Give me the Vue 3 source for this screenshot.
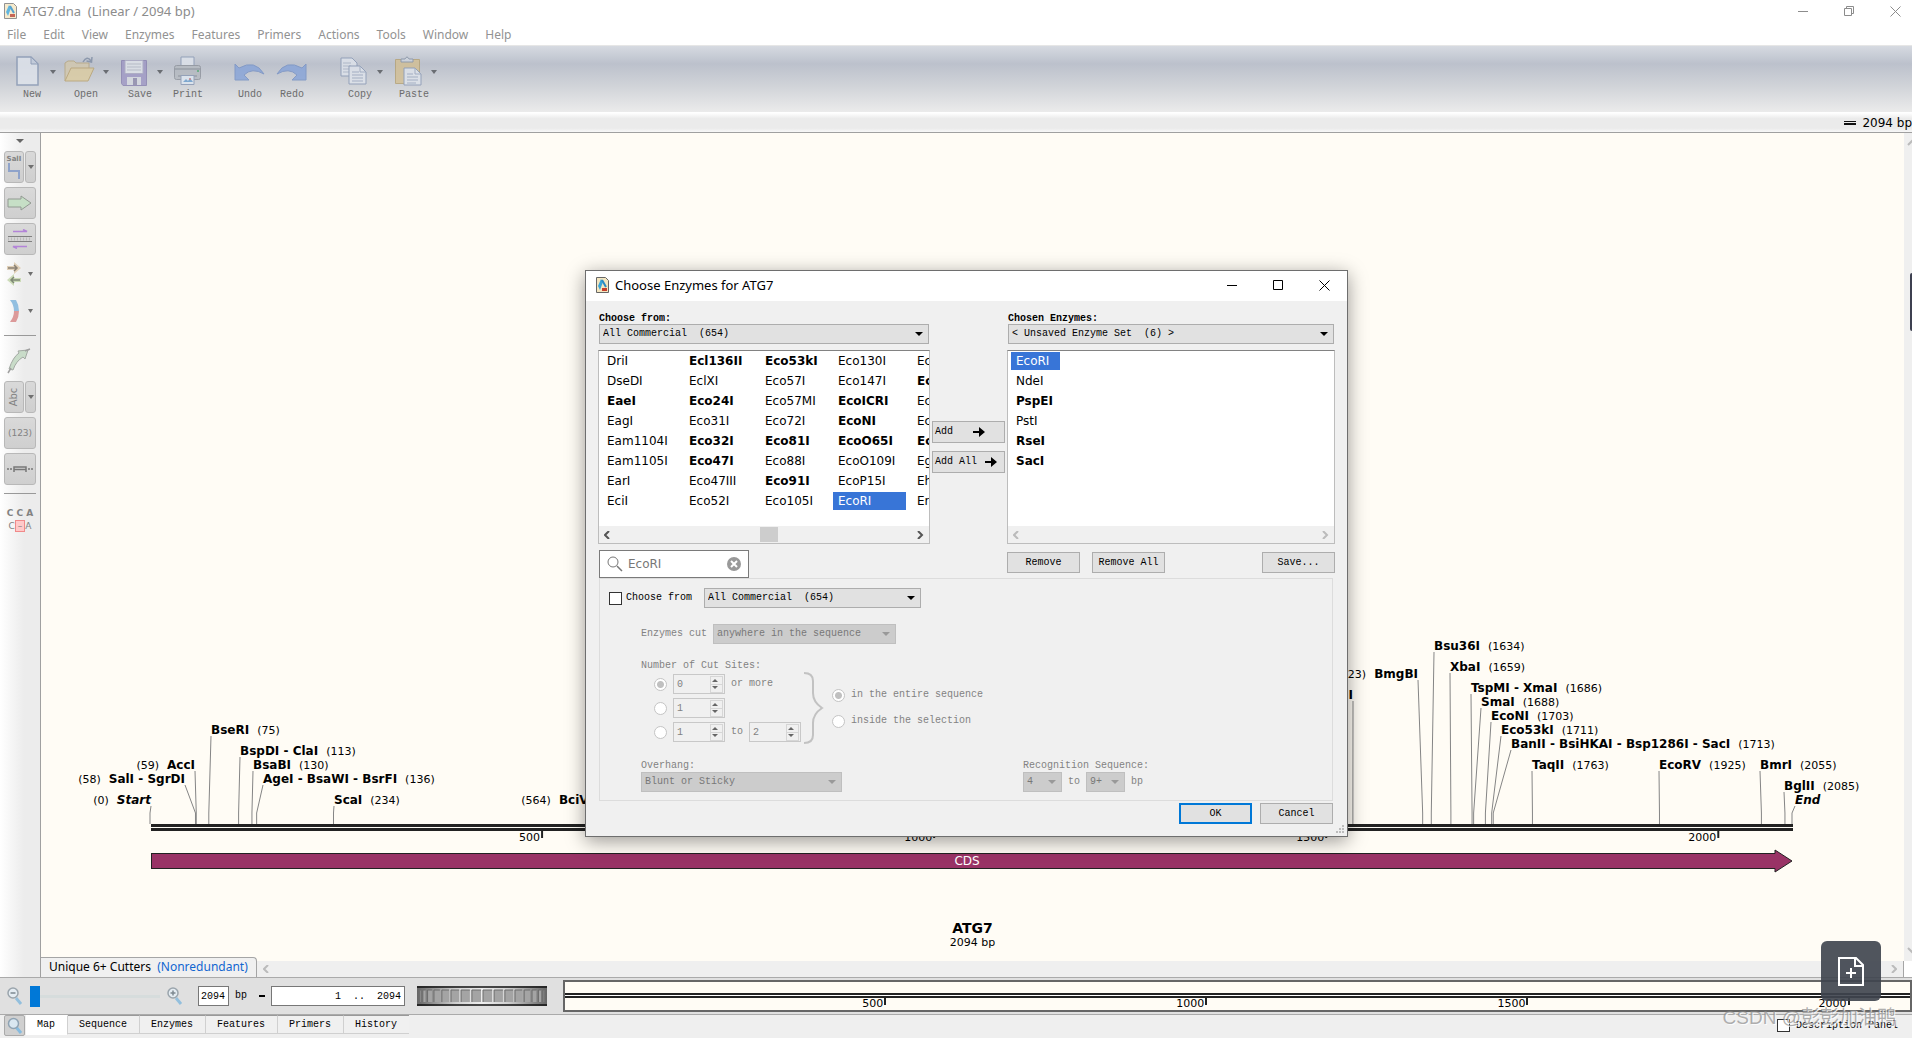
<script setup>
import { ref } from 'vue'

const menus = ['File', 'Edit', 'View', 'Enzymes', 'Features', 'Primers', 'Actions', 'Tools', 'Window', 'Help']
const tabs = ['Map', 'Sequence', 'Enzymes', 'Features', 'Primers', 'History']

// [name, bold]
const columns = [
  { w: 82, items: [['DriI'], ['DseDI'], ['EaeI', 1], ['EagI'], ['Eam1104I'], ['Eam1105I'], ['EarI'], ['EciI']] },
  { w: 76, items: [['Ecl136II', 1], ['EclXI'], ['Eco24I', 1], ['Eco31I'], ['Eco32I', 1], ['Eco47I', 1], ['Eco47III'], ['Eco52I']] },
  { w: 73, items: [['Eco53kI', 1], ['Eco57I'], ['Eco57MI'], ['Eco72I'], ['Eco81I', 1], ['Eco88I'], ['Eco91I', 1], ['Eco105I']] },
  { w: 79, items: [['Eco130I'], ['Eco147I'], ['EcoICRI', 1], ['EcoNI', 1], ['EcoO65I', 1], ['EcoO109I'], ['EcoP15I'], ['EcoRI']] },
  { w: 73, items: [['EcoRII'], ['EcoRV', 1], ['EcoT14I'], ['EcoT22I'], ['EcoT38I', 1], ['EgeI'], ['EheI'], ['ErhI']] },
]
const chosen = [['EcoRI'], ['NdeI'], ['PspEI', 1], ['PstI'], ['RseI', 1], ['SacI', 1]]

// Map canvas: horizontal units are 1863 wide, vertical ones are pixels.
const W = 1863
const pct = (v) => (v / W) * 100 + '%'
const site = (bp) => 109 + (bp * 1642) / 2094

const left = [
  { n: 'Start', bp: 0, x: 110, y: 671, it: true },
  { n: 'SalI - SgrDI', bp: 58, x: 144, y: 650 },
  { n: 'AccI', bp: 59, x: 154, y: 636 },
  { n: 'BciVI', bp: 564, x: 552, y: 671 },
  { n: 'PflMI', bp: 1534, x: 1312, y: 566 },
  { n: 'BmgBI', bp: 1623, x: 1377, y: 545 },
]
const right = [
  { n: 'BseRI', bp: 75, x: 170, y: 601 },
  { n: 'BspDI - ClaI', bp: 113, x: 199, y: 622 },
  { n: 'BsaBI', bp: 130, x: 212, y: 636 },
  { n: 'AgeI - BsaWI - BsrFI', bp: 136, x: 222, y: 650 },
  { n: 'ScaI', bp: 234, x: 293, y: 671 },
  { n: 'Bsu36I', bp: 1634, x: 1393, y: 517 },
  { n: 'XbaI', bp: 1659, x: 1409, y: 538 },
  { n: 'TspMI - XmaI', bp: 1686, x: 1430, y: 559 },
  { n: 'SmaI', bp: 1688, x: 1440, y: 573 },
  { n: 'EcoNI', bp: 1703, x: 1450, y: 587 },
  { n: 'Eco53kI', bp: 1711, x: 1460, y: 601 },
  { n: 'BanII - BsiHKAI - Bsp1286I - SacI', bp: 1713, x: 1470, y: 615 },
  { n: 'TaqII', bp: 1763, x: 1491, y: 636 },
  { n: 'EcoRV', bp: 1925, x: 1618, y: 636 },
  { n: 'BmrI', bp: 2055, x: 1719, y: 636 },
  { n: 'BglII', bp: 2085, x: 1743, y: 657 },
  { n: 'End', bp: 2094, x: 1754, y: 671, it: true, hideBp: true },
]
const ticks = [500, 1000, 1500, 2000]
const overviewTick = (bp) => (bp / 2094) * 100 + '%'

// Segments of the thumbwheel, a drum seen from the side.
const SEG = 16
const drum = (i) => 65 - 64 * Math.cos((Math.PI * (i + 1)) / (SEG + 2))
const segments = Array.from({ length: SEG }, (_, i) => ({ x: drum(i), w: drum(i + 1) - drum(i) - 2 }))

const limit = ref(false)
</script>

<template>
  <div class="app">
    <header class="titlebar">
      <svg class="appicon" width="13" height="16" viewBox="0 0 13 16"><path d="M.5.5h9l3 3v12H.5z" fill="#f4e6c0" stroke="#777"/><path d="M2 9 5 2l2 3-3 8z" fill="#3aa5d8"/><path d="m6 3 4 7" stroke="#2b8bc4" stroke-width="2"/><path d="M6 11h5v3H6z" fill="#b8402c"/></svg>
      <h1>ATG7.dna &nbsp;(Linear / 2094 bp)</h1>
      <div class="winbtns">
        <button aria-label="Minimize"><svg width="11" height="11" viewBox="0 0 11 11"><path d="M0 5.500h10"/></svg></button>
        <button aria-label="Restore"><svg width="11" height="11" viewBox="0 0 11 11"><path d="M.5 2.500h7v7h-7zM2.500 2.500v-2h7v7h-2"/></svg></button>
        <button aria-label="Close"><svg width="11" height="11" viewBox="0 0 11 11"><path d="m.5.5 10 10M10.500.5l-10 10"/></svg></button>
      </div>
    </header>
    <nav class="menubar"><button v-for="m in menus" :key="m">{{ m }}</button></nav>

    <div class="toolbar">
      <button class="tool">
        <svg width="54" height="32" viewBox="0 0 54 32"><path d="M12 2h14l7 7v21H12z" fill="#dfe4ec" stroke="#8797b3" stroke-width="1.500"/><path d="M26 2v7h7z" fill="#c3cddd" stroke="#8797b3"/><path class="dd" d="M45 15h6l-3 4z"/></svg>
        New
      </button>
      <button class="tool">
        <svg width="54" height="32" viewBox="0 0 54 32"><path d="M6 26V8l3-2h6l2 2h13v7" fill="#d3c8ad" stroke="#b7a57c"/><path d="M6 26 12 13h23l-6 13z" fill="#dccca0" stroke="#b9a26e"/><path d="M24 7q4-7 8-1m1-4-.5 5-5-1" fill="none" stroke="#7f8da3" stroke-width="1.500"/><path class="dd" d="M44 15h6l-3 4z"/></svg>
        Open
      </button>
      <button class="tool">
        <svg width="54" height="32" viewBox="0 0 54 32"><path d="M8.500 5.500h25v25H10l-1.500-2z" fill="#9d96c4" stroke="#8881af"/><path d="M12 5.500h18v13H12z" fill="#e0e4ea" stroke="#a9a7c2"/><path d="M14 9h14m-14 3h14m-14 3h14" stroke="#b4b9c5"/><path d="M14 22h14v8H14z" fill="#d5d8e0"/><path d="M20 23h4v7h-4z" fill="#8d89ab"/><path class="dd" d="M44 15h6l-3 4z"/></svg>
        Save
      </button>
      <button class="tool slim">
        <svg width="42" height="32" viewBox="0 0 42 32"><path d="M14 2h13v10H14z" fill="#dfe4ec" stroke="#8797b3"/><rect x="7.500" y="10.500" width="26" height="14" rx="2" fill="#b4b9c0" stroke="#8d929b"/><path d="M8 14h25M11 21h19" stroke="#7f858f"/><path d="M30 16h2" stroke="#5aa878" stroke-width="2"/><path d="M14 20.500h13v9H14z" fill="#dfe8f2" stroke="#8797b3"/><path d="m16 27 3-3 2 2 2-3 3 4z" fill="#6c9fce"/><circle cx="23" cy="24" r="1" fill="#c77"/></svg>
        Print
      </button>
      <button class="tool slim gap">
        <svg width="42" height="32" viewBox="0 0 42 32"><path d="M6 9v16h14l-5-5q8-8 20-1-9-15-25-6z" fill="#86a3d8" stroke="#7590c4"/></svg>
        Undo
      </button>
      <button class="tool slim">
        <svg width="42" height="32" viewBox="0 0 42 32"><path d="M35 9v16H21l5-5q-8-8-20-1 9-15 25-6z" fill="#86a3d8" stroke="#7590c4"/></svg>
        Redo
      </button>
      <button class="tool gap">
        <svg width="54" height="32" viewBox="0 0 54 32"><path d="M8 3h11l5 5v13H8z" fill="#dfe4ec" stroke="#8797b3"/><path d="M10 8h8m-8 3h8m-8 3h8m-8 3h8" stroke="#aab4c6"/><path d="M16 11h11l6 6v12H16z" fill="#dfe4ec" stroke="#8797b3"/><path d="M27 11v6h6M19 17h7m-7 3h11m-11 3h11m-11 3h11" fill="none" stroke="#9aa7be"/><path class="dd" d="M44 15h6l-3 4z"/></svg>
        Copy
      </button>
      <button class="tool">
        <svg width="54" height="32" viewBox="0 0 54 32"><path d="M8.500 4.500h24v24h-24z" fill="#d3bf93" stroke="#b5a172"/><path d="M14 7V4h4q2-4 4 0h4v3z" fill="#cfd5de" stroke="#8490a3"/><path d="M17 13h11l6 6v11H17z" fill="#dfe4ec" stroke="#8797b3"/><path d="M28 13v6h6M20 19h6m-6 3h11m-11 3h11m-11 3h9" fill="none" stroke="#9aa7be"/><path class="dd" d="M44 15h6l-3 4z"/></svg>
        Paste
      </button>
    </div>

    <div class="infobar"><i class="dbl"></i><span>2094 bp</span></div>

    <main class="main">
      <aside class="side">
        <svg class="caret" width="8" height="4" viewBox="0 0 8 4"><path d="M0 0h8L4 4z"/></svg>
        <div class="pair">
          <button class="sq narrow" aria-label="Enzyme sites"><small>SalI</small><svg width="16" height="17" viewBox="0 0 16 17"><path d="M3 0v8h10v8" fill="none" stroke="#8fa3ca" stroke-width="2"/></svg></button>
          <button class="sq drop" aria-label="Enzyme options"><svg width="6" height="4" viewBox="0 0 6 4"><path d="M0 0h6L3 4z"/></svg></button>
        </div>
        <button class="sq" aria-label="Features"><svg width="26" height="16" viewBox="0 0 26 16"><path d="M1 4h13V1l10 7-10 7v-3H1z" fill="#c6dfc6" stroke="#929a92"/></svg></button>
        <button class="sq" aria-label="Primers"><svg width="26" height="20" viewBox="0 0 26 20"><path d="M6 2.500h14l-4-2M20 17.500H6l4 2" fill="none" stroke="#b384d8" stroke-width="1.500"/><path d="M1 7.500h24M1 12.500h24" stroke="#808080"/><path d="M1 10h24" stroke="#bbb" stroke-width="3" stroke-dasharray="1 2"/></svg></button>
        <button class="plain" aria-label="ORFs"><svg width="30" height="26" viewBox="0 0 30 26"><path d="M1 4h7V0l7 6-7 6V8H1z" fill="#e0d0b8"/><path d="M2 6h9M8 3l3 3-3 3" stroke="#8a8174" stroke-width="1.500" fill="none"/><path d="M15 16H8v-4l-7 6 7 6v-4h7z" fill="#ccdbb8"/><path d="M14 18H5m3-3-3 3 3 3" stroke="#7e8874" stroke-width="1.500" fill="none"/><path d="M22 10h5l-2.500 4z" fill="#6e6e6e"/></svg></button>
        <button class="plain" aria-label="Translation"><svg width="30" height="26" viewBox="0 0 30 26"><path d="M4 2h6q3 5 3 11H8Q8 7 4 2z" fill="#92bfe0"/><path d="M13 13q0 6-3 11H4q4-5 4-11z" fill="#dc9a9a"/><path d="M22 11h5l-2.500 4z" fill="#6e6e6e"/></svg></button>
        <hr />
        <button class="plain" aria-label="Draw feature"><svg width="26" height="26" viewBox="0 0 26 26"><path d="M3 21Q7 9 13 5l-1-2 10-1-3 9-2-2Q10 13 7 22z" fill="#c9dcc9" stroke="#a3a9a3"/><path d="m2 25 3-5M19 3l5-2" stroke="#a0a0a0" stroke-width="1.500"/></svg></button>
        <div class="pair">
          <button class="sq narrow"><span class="vert">Abc</span></button>
          <button class="sq drop" aria-label="Label options"><svg width="6" height="4" viewBox="0 0 6 4"><path d="M0 0h6L3 4z"/></svg></button>
        </div>
        <button class="sq num">(123)</button>
        <button class="sq" aria-label="Gap display"><svg width="28" height="8" viewBox="0 0 28 8"><path d="M1 4h2m1 0h2m16 0h2m1 0h2M8 7V2h12v5M8 4.500h12" fill="none" stroke="#777" stroke-width="1.500"/></svg></button>
        <hr />
        <div class="cca"><span>C C A</span><span class="low">C<mark>–</mark>A</span></div>
      </aside>

      <section class="canvas">
        <svg class="map">
          <g v-for="s in [...left, ...right]" :key="'l' + s.bp" stroke="#858585">
            <line :x1="pct(s.x)" :y1="s.y + 2" :x2="pct(site(s.bp))" y2="680" />
            <line :x1="pct(site(s.bp))" y1="680" :x2="pct(site(s.bp))" y2="691" />
          </g>
          <text v-for="s in left" :key="s.n" :x="pct(s.x)" :y="s.y" text-anchor="end">({{ s.bp }})<tspan dx="8" :class="['site', { it: s.it }]">{{ s.n }}</tspan></text>
          <text v-for="s in right" :key="s.n" :x="pct(s.x)" :y="s.y"><tspan :class="['site', { it: s.it }]">{{ s.n }}</tspan><tspan v-if="!s.hideBp" dx="8">({{ s.bp }})</tspan></text>
          <rect :x="pct(110)" y="691" :width="pct(1642)" height="3" fill="#222" />
          <rect :x="pct(110)" y="695" :width="pct(1642)" height="3" fill="#222" />
          <g v-for="t in ticks" :key="t">
            <rect :x="pct(site(t) - 1)" y="698" width="2" height="7" fill="#222" />
            <text :x="pct(site(t) - 2)" y="708" text-anchor="end">{{ t }}</text>
          </g>
        </svg>
        <div class="cds">
          <span>CDS</span>
          <svg width="19" height="24" viewBox="0 0 19 24"><path d="M0 4.500h1V1l17 11L1 23v-3.500H0" fill="#993366" stroke="#222"/></svg>
        </div>
        <div class="caption"><b>ATG7</b><span>2094 bp</span></div>
        <div class="hrow">
          <span class="settab">Unique 6+ Cutters &nbsp;<em>(Nonredundant)</em></span>
          <span class="hbar"><svg width="6" height="8" viewBox="0 0 6 8"><path d="M5 0 1 4l4 4"/></svg><svg width="6" height="8" viewBox="0 0 6 8"><path d="m1 0 4 4-4 4"/></svg></span>
          <i class="corner"></i>
        </div>
      </section>
      <div class="vbar"><svg width="8" height="8" viewBox="0 0 8 8"><path d="m1 7 5-5 5 5"/></svg><svg width="8" height="8" viewBox="0 0 8 8"><path d="m1 1 5 5 5-5"/></svg></div>
    </main>

    <div class="zoombar">
      <svg width="16" height="18" viewBox="0 0 16 18"><path d="m9 11 5 6" stroke="#93bfdd" stroke-width="3"/><circle cx="6" cy="6" r="5" fill="#e4ecf2" stroke="#9aa4ac" stroke-width="1.500"/><path d="M3.500 6h5" stroke="#7d8890" stroke-width="1.500"/></svg>
      <input class="slider" type="range" min="0" max="100" value="0" aria-label="Zoom" />
      <svg width="16" height="18" viewBox="0 0 16 18"><path d="m9 11 5 6" stroke="#93bfdd" stroke-width="3"/><circle cx="6" cy="6" r="5" fill="#e4ecf2" stroke="#9aa4ac" stroke-width="1.500"/><path d="M3.500 6h5M6 3.500v5" stroke="#7d8890" stroke-width="1.500"/></svg>
      <input class="box len" value="2094" aria-label="Length" />
      <span class="bp">bp</span><i class="dash"></i>
      <input class="box range" value="1  ..  2094" aria-label="Selected range" />
      <svg class="wheel" width="130" height="20" viewBox="0 0 130 20">
        <defs>
          <linearGradient id="drum"><stop offset="0" stop-color="#666" /><stop offset=".3" stop-color="#d0d0d0" /><stop offset=".5" stop-color="#eee" /><stop offset=".7" stop-color="#d0d0d0" /><stop offset="1" stop-color="#666" /></linearGradient>
        </defs>
        <rect width="130" height="20" fill="url(#drum)" />
        <rect v-for="s in segments" :key="s.x" :x="s.x + 1" y="4" :width="Math.max(s.w, 1)" height="12" fill="#a4a4a4" />
        <path v-for="s in segments" :key="'e' + s.x" :d="`M${s.x + 1} 16V4h${Math.max(s.w, 1)}`" fill="none" stroke="#6c6c6c" />
        <path d="M0 1h130M0 19h130" stroke="#111" stroke-width="1.500" />
      </svg>
      <div class="overview">
        <div class="strand"></div>
        <span v-for="t in ticks" :key="t" class="otick" :style="{ left: overviewTick(t) }">{{ t }}</span>
      </div>
    </div>

    <footer class="tabs">
      <button class="mag" aria-label="Find"><svg width="16" height="18" viewBox="0 0 16 18"><path d="m9 10 5 6" stroke="#86bbdf" stroke-width="3"/><circle cx="6.500" cy="6.500" r="5" fill="#d9e7f1" stroke="#8fa3b3" stroke-width="1.500"/></svg></button>
      <button v-for="(t, i) in tabs" :key="t" :class="['tab', { on: i === 0 }]">{{ t }}</button>
      <label class="desc"><input type="checkbox" />Description Panel</label>
    </footer>

    <section class="dialog" role="dialog" aria-label="Choose Enzymes for ATG7">
      <header class="dtitle">
        <svg width="13" height="16" viewBox="0 0 13 16"><path d="M.5.5h9l3 3v12H.5z" fill="#f4e6c0" stroke="#666"/><path d="M2 9 5 2l2 3-3 8z" fill="#3aa5d8"/><path d="m6 3 4 7" stroke="#2b8bc4" stroke-width="2"/><path d="M6 11h5v3H6z" fill="#c8402c"/></svg>
        <h2>Choose Enzymes for ATG7</h2>
        <div class="winbtns">
          <button aria-label="Minimize"><svg width="11" height="11" viewBox="0 0 11 11"><path d="M0 5.500h10"/></svg></button>
          <button aria-label="Maximize"><svg width="11" height="11" viewBox="0 0 11 11"><path d="M.5.5h9v9h-9z"/></svg></button>
          <button aria-label="Close"><svg width="11" height="11" viewBox="0 0 11 11"><path d="m.5.5 10 10M10.500.5l-10 10"/></svg></button>
        </div>
      </header>

      <div class="pick">
        <div class="col from">
          <label class="head" for="src">Choose from:</label>
          <span class="sel wide"><select id="src"><option>All Commercial &nbsp;(654)</option></select></span>
          <div class="list">
            <div class="cols">
              <ul v-for="(c, i) in columns" :key="i" :style="{ width: c.w + 'px' }">
                <li v-for="e in c.items" :key="e[0]" :class="{ b: e[1], sel1: e[0] === 'EcoRI' }">{{ e[0] }}</li>
              </ul>
            </div>
            <div class="scroll dark"><svg width="7" height="8" viewBox="0 0 7 8"><path d="M5 0 1 4l4 4"/></svg><i></i><svg width="7" height="8" viewBox="0 0 7 8"><path d="m1 0 4 4-4 4"/></svg></div>
          </div>
          <div class="search">
            <svg width="16" height="16" viewBox="0 0 16 16"><circle cx="6" cy="6" r="5" fill="none" stroke="#777"/><path d="m10 10 5 5" stroke="#777" stroke-width="1.500"/></svg>
            <input value="EcoRI" aria-label="Search enzymes" />
            <button aria-label="Clear"><svg width="14" height="14" viewBox="0 0 14 14"><circle cx="7" cy="7" r="7" fill="#999"/><path d="m4 4 6 6m0-6-6 6" stroke="#fff" stroke-width="2"/></svg></button>
          </div>
        </div>

        <div class="moves">
          <button class="btn">Add<svg width="12" height="10" viewBox="0 0 12 10"><path d="M0 4h6V0l6 5-6 5V6H0z"/></svg></button>
          <button class="btn all">Add All<svg width="12" height="10" viewBox="0 0 12 10"><path d="M0 4h6V0l6 5-6 5V6H0z"/></svg></button>
        </div>

        <div class="col to">
          <label class="head" for="set">Chosen Enzymes:</label>
          <span class="sel wide"><select id="set"><option>&lt; Unsaved Enzyme Set &nbsp;(6) &gt;</option></select></span>
          <div class="list">
            <div class="cols">
              <ul>
                <li v-for="e in chosen" :key="e[0]" :class="{ b: e[1], sel2: e[0] === 'EcoRI' }">{{ e[0] }}</li>
              </ul>
            </div>
            <div class="scroll"><svg width="7" height="8" viewBox="0 0 7 8"><path d="M5 0 1 4l4 4"/></svg><svg width="7" height="8" viewBox="0 0 7 8"><path d="m1 0 4 4-4 4"/></svg></div>
          </div>
          <div class="acts"><button class="btn">Remove</button><button class="btn">Remove All</button><button class="btn last">Save...</button></div>
        </div>
      </div>

      <div class="panel">
        <div class="row">
          <label class="chk"><input v-model="limit" type="checkbox" />Choose from</label>
          <span class="sel w217"><select aria-label="Choose from"><option>All Commercial &nbsp;(654)</option></select></span>
        </div>
        <div class="inner">
          <div class="row">
            <label for="cut">Enzymes cut</label>
            <span class="sel w183 off"><select id="cut" disabled><option>anywhere in the sequence</option></select></span>
          </div>
          <div class="sites">
            <p>Number of Cut Sites:</p>
            <div class="sitesrow">
              <div class="counts">
                <div class="line"><input type="radio" name="n" checked disabled aria-label="At least" /><span class="spin"><input type="number" value="0" disabled aria-label="Minimum" /></span>or more</div>
                <div class="line"><input type="radio" name="n" disabled aria-label="Exactly" /><span class="spin"><input type="number" value="1" disabled aria-label="Exact count" /></span></div>
                <div class="line"><input type="radio" name="n" disabled aria-label="Between" /><span class="spin"><input type="number" value="1" disabled aria-label="Lowest" /></span>to<span class="spin"><input type="number" value="2" disabled aria-label="Highest" /></span></div>
              </div>
              <svg class="brace" width="20" height="72" viewBox="0 0 20 72"><path d="M0 1q9 0 9 8v12q0 9 9 15-9 6-9 15v12q0 8-9 8" fill="none" stroke="#c2c2c2" stroke-width="2"/></svg>
              <div class="where">
                <label><input type="radio" name="w" checked disabled />in the entire sequence</label>
                <label><input type="radio" name="w" disabled />inside the selection</label>
              </div>
            </div>
          </div>
          <div class="ends">
            <div class="fld"><label for="oh">Overhang:</label><span class="sel w201 off"><select id="oh" disabled><option>Blunt or Sticky</option></select></span></div>
            <div class="fld rec">
              <label for="r1">Recognition Sequence:</label>
              <div class="line"><span class="sel w39 off"><select id="r1" disabled><option>4</option></select></span>to<span class="sel w39 off"><select disabled aria-label="Longest"><option>9+</option></select></span>bp</div>
            </div>
          </div>
        </div>
      </div>
      <div class="foot"><button class="btn ok">OK</button><button class="btn">Cancel</button></div>
      <svg class="grip" width="9" height="9" viewBox="0 0 9 9"><path d="M6 0h2v2H6zM3 3h2v2H3zM6 3h2v2H6zM0 6h2v2H0zM3 6h2v2H3zM6 6h2v2H6z" fill="#bcbcbc"/></svg>
    </section>

    <i class="edge"></i>
    <button class="float" aria-label="Add note"><svg width="26" height="29" viewBox="0 0 26 29"><path d="M1 1h17l7 7v20H1zM17 1v8h8M13 11v10M8 16h10" fill="none" stroke="#fff" stroke-width="2"/></svg></button>
    <span class="mark">CSDN @彭彭加油鸭</span>
  </div>
</template>

<style>
body { overflow: hidden; }
</style>

<style scoped>
.app { position: relative; display: flex; flex-direction: column; height: 100vh; background: #fff; color: #000; font: 10px/12px "Liberation Mono", monospace; overflow: hidden; }
.app * { box-sizing: border-box; }
button { font: inherit; color: inherit; border: 0; background: none; padding: 0; margin: 0; }
input, select { font: inherit; color: inherit; margin: 0; }
ul, p, h1, h2 { margin: 0; padding: 0; list-style: none; }

.titlebar { display: flex; align-items: center; height: 22px; padding-left: 4px; color: #8c8c8c; }
.appicon { opacity: .8; }
h1, h2 { font: 13px/18px "Noto Sans", sans-serif; margin-left: 6px; }
.winbtns { display: flex; margin-left: auto; }
.winbtns button { width: 46px; display: flex; justify-content: center; }
.winbtns path { fill: none; stroke: currentColor; }
.titlebar .winbtns { margin-right: -6px; }
.menubar { display: flex; gap: 17px; height: 23px; padding: 3px 8px 0 7px; font: 12px/18px "Noto Sans", sans-serif; color: #929292; align-items: flex-start; }
.menubar button { height: 20px; }

.toolbar { display: flex; height: 67px; padding: 9px 5px 0; border-top: 1px solid #e6e6e6; background: linear-gradient(#d6dae1, #bcc1cc 27%, #d0d3d8 60%, #ebebeb); color: #6c6c6c; }
.tool { width: 54px; display: flex; flex-direction: column; align-items: center; gap: 2px; height: 48px; }
.tool svg { opacity: .8; }
.tool.slim { width: 42px; }
.tool.gap { margin-left: 20px; }
.dd { fill: #54575c; }

.infobar { display: flex; align-items: center; justify-content: flex-end; gap: 6px; height: 21px; border-bottom: 1px solid #a0a0a0; border-top: 1px solid #fff; background: linear-gradient(#fff, #ebebeb 30%, #ebebeb 80%, #f8f8f8); font: 12px/18px "DejaVu Sans", sans-serif; }
.infobar span { white-space: nowrap; }
.dbl { width: 12px; height: 4px; border: solid #111; border-width: 1px 0 2px; }

.main { flex: 1; display: flex; min-height: 0; }
.side { width: 41px; display: flex; flex-direction: column; gap: 4px; padding: 6px 4px; border-right: 1px solid #a0a0a0; background: linear-gradient(90deg, #fff, #ececec 60%); color: #828282; }
.caret { margin: 0 auto 4px 12px; fill: #666; }
.sq { width: 32px; height: 32px; border: 1px solid #b8b8b8; border-radius: 3px; background: linear-gradient(#d9d9d9, #cfcfcf); display: flex; flex-direction: column; align-items: center; justify-content: center; }
.pair { display: flex; gap: 1px; }
.narrow { width: 20px; }
.drop { width: 11px; }
.drop path { fill: #707070; }
.sq small { font: bold 7px/8px "DejaVu Sans", sans-serif; }
.vert { font: 10px/12px "DejaVu Sans", sans-serif; transform: rotate(-90deg); }
.num { font: 9px/12px "DejaVu Sans", sans-serif; }
.plain { height: 32px; display: flex; align-items: center; padding-left: 2px; }
.side hr { width: 32px; height: 1px; margin: 4px 0 5px; border: 0; background: #999; }
.cca { font: bold 9px/13px "DejaVu Sans", sans-serif; width: 32px; margin-top: 4px; text-align: center; display: flex; flex-direction: column; white-space: nowrap; }
.low { font-weight: normal; }
mark { color: inherit; background: #ffc9c9; border: 1px solid #f08a8a; padding: 0 2px; }

.canvas { flex: 1; min-width: 0; position: relative; display: flex; flex-direction: column; background: #fffcf5; font: 11px/14px "DejaVu Sans", sans-serif; }
.map { width: 100%; height: 716px; display: block; overflow: hidden; }
.site { font-size: 12px; font-weight: bold; }
.it { font-style: italic; }
.cds { display: flex; align-items: center; height: 24px; margin: 0 111px 0 110px; color: #fff; }
.cds span { flex: 1; height: 16px; border: 1px solid #222; border-right: 0; background: #993366; text-align: center; font-size: 12px; padding-left: 8px; }
.caption { display: flex; flex-direction: column; align-items: center; margin: 47px 0 auto; }
.caption b { font-size: 14px; line-height: 16px; }
.hrow { display: flex; align-items: flex-end; height: 20px; font: 12px/16px "Noto Sans", sans-serif; }
.settab { height: 20px; padding: 1px 8px 0; border: 1px solid #a5a5a5; border-width: 1px 1px 0 0; border-radius: 0 4px 0 0; background: #f0f0f0; white-space: nowrap; }
.settab em { font-style: normal; color: #1166d0; }
.hbar { flex: 1; height: 16px; background: #efefef; display: flex; align-items: center; justify-content: space-between; padding: 0 6px; }
.hbar path, .vbar path, .scroll path { fill: none; stroke: #bbb; stroke-width: 2; }
.corner { width: 1px; height: 16px; background: #a5a5a5; }
.vbar { width: 8px; background: linear-gradient(#efefef, #efefef) top / 100% calc(100% - 16px) no-repeat #fff; display: flex; flex-direction: column; justify-content: space-between; padding: 5px 0 22px 3px; }

.zoombar { display: flex; align-items: center; height: 38px; padding-left: 7px; background: #e0e0e0; border: solid #aaa; border-width: 1px 0; }
.slider { appearance: none; width: 130px; height: 22px; margin: 0 7px; background: linear-gradient(#d6dcdc, #d6dcdc) center / 100% 3px no-repeat; }
.slider::-webkit-slider-thumb { appearance: none; width: 10px; height: 21px; background: #0078d7; }
.box { height: 20px; border: 1px solid #777; border-radius: 0; background: #fff; padding: 0 3px; outline: 0; }
.len { width: 31px; margin-left: 15px; padding: 0 2px; }
.bp { margin: 0 12px 0 6px; }
.dash { width: 6px; height: 2px; margin-right: 6px; background: #000; }
.range { width: 134px; text-align: right; white-space: pre; }
.wheel { flex: none; margin: 0 16px 0 12px; }
.overview { flex: 1; height: 32px; position: relative; border: 2px solid #666; background: #fffcf5; font: 11px/12px "DejaVu Sans", sans-serif; }
.strand { height: 5px; margin-top: 11px; border: solid #222; border-width: 2px 0; background: #fff; }
.otick { position: absolute; top: 16px; padding-right: 3px; transform: translateX(-100%); }
.otick::after { content: ""; position: absolute; right: 0; top: 0; width: 2px; height: 7px; background: #222; }

.tabs { display: flex; align-items: flex-start; height: 23px; background: #efefef; }
.mag { width: 21px; height: 21px; margin: 0 1px 0 4px; border: 1px solid #aaa; background: #d0d0d0; border-radius: 2px; display: flex; justify-content: center; align-items: center; }
.tab { height: 19px; padding: 0 12px 0 11px; border: solid #d0d0d0; border-width: 1px 1px 1px 0; border-top-color: #999; background: #f0f0f0; }
.tab.on { background: #fff; border-color: #fff #d0d0d0 #fff #fff; height: 20px; }
.tab:last-of-type { border-right: 0; }
.desc { margin: 4px 14px 0 auto; display: flex; align-items: center; gap: 6px; }
input[type="checkbox"] { appearance: none; width: 13px; height: 13px; border: 1px solid #333; background: #fff; }

.dialog { position: absolute; left: 585px; top: 270px; width: 763px; border: 1px solid #6e6e6e; background: #f0f0f0; box-shadow: 0 4px 18px #0006; }
.dtitle { display: flex; align-items: center; height: 30px; padding: 0 0 2px 10px; background: #fff; }
.pick { display: flex; padding: 12px 12px 0; }
.col { display: flex; flex-direction: column; }
.from { width: 332px; }
.to { width: 328px; }
.head { height: 11px; line-height: 12px; font-weight: bold; margin-left: 1px; }
.sel { position: relative; display: block; height: 20px; border: 1px solid #adadad; background: #e1e1e1; }
.wide { margin: 0 1px; }
.sel select { appearance: none; display: block; width: 100%; height: 18px; border: 0; background: none; padding: 0 3px; opacity: 1; outline: 0; }
.sel::after { content: ""; position: absolute; right: 5px; top: 7px; border: 4px solid transparent; border-top-color: #000; border-bottom: 0; }
.off { background: #ccc; border-color: #bfbfbf; color: #787878; }
.off::after { border-top-color: #999; }
.list { height: 194px; margin-top: 6px; border: 1px solid #bdbdbd; border-top-color: #828282; background: #fff; display: flex; flex-direction: column; overflow: hidden; }
.cols { flex: 1; display: flex; padding-left: 3px; font: 12px/20px "DejaVu Sans", sans-serif; overflow: hidden; }
.cols ul { flex: none; }
.cols li { height: 20px; padding-left: 5px; white-space: nowrap; }
.b { font-weight: bold; }
.sel1, .sel2 { width: 73px; color: #fff; background: linear-gradient(#3875d7, #3875d7) 0 1px / 100% 18px no-repeat; }
.sel2 { width: 49px; }
.scroll { height: 17px; background: #f0f0f0; display: flex; align-items: center; justify-content: space-between; padding: 0 5px; }
.scroll.dark path { stroke: #555; }
.scroll i { width: 18px; height: 15px; margin-left: 9px; background: #cdcdcd; }
.search { display: flex; align-items: center; width: 150px; height: 28px; margin: 6px 0 0 1px; padding: 0 7px; border: 1px solid #7a7a7a; background: #fff; }
.search input { flex: 1; min-width: 0; border: 0; outline: 0; padding: 0 5px; font: 12px/16px "DejaVu Sans", sans-serif; color: #777; }
.search button { display: flex; }
.moves { width: 77px; padding: 108px 2px 0; display: flex; flex-direction: column; gap: 8px; }
.btn { width: 73px; height: 21px; padding-top: 1px; border: 1px solid #adadad; background: #e1e1e1; }
.moves .btn { height: 22px; display: flex; align-items: center; justify-content: space-between; padding: 0 19px 0 2px; }
.moves .all { padding-right: 7px; }
.acts { display: flex; gap: 12px; margin-top: 8px; }
.last { margin-left: auto; }
.panel { height: 223px; margin: 0 14px 0 13px; padding: 9px 0 0 9px; border: 1px solid #dcdcdc; }
.row { display: flex; align-items: center; }
.chk { display: flex; align-items: center; gap: 4px; margin-right: 12px; }
.w217 { width: 217px; } .w183 { width: 183px; } .w201 { width: 201px; } .w39 { width: 39px; }
.inner { padding: 16px 0 0 32px; color: #828282; }
.inner .row { gap: 6px; }
.sites { margin-top: 16px; }
.sitesrow { display: flex; align-items: center; height: 72px; padding-left: 13px; }
.counts { display: flex; flex-direction: column; gap: 4px; width: 150px; }
.line { display: flex; align-items: center; gap: 6px; height: 20px; }
input[type="radio"] { appearance: none; flex: none; width: 13px; height: 13px; border: 1px solid #c4c4c4; border-radius: 50%; background: #fff; }
input[type="radio"]:checked { background: radial-gradient(#c0c0c0 0 3px, #fff 4px); }
.spin { position: relative; width: 52px; height: 20px; border: 1px solid #c8c8c8; }
.spin input { appearance: textfield; display: block; width: 34px; height: 18px; border: 0; padding: 0 3px; background: none; }
.spin input::-webkit-inner-spin-button { appearance: none; }
.spin::before, .spin::after { content: ""; position: absolute; right: 6px; border: 3px solid transparent; }
.spin::before { top: 4px; border-top: 0; border-bottom-color: #666; box-sizing: border-box; }
.spin::after { bottom: 4px; border-bottom: 0; border-top-color: #666; }
.spin { background: linear-gradient(#d6d6d6, #d6d6d6) 36px 9px / 13px 1px no-repeat, linear-gradient(#d6d6d6, #d6d6d6) 36px 1px / 13px 1px no-repeat, linear-gradient(#d6d6d6, #d6d6d6) 36px 17px / 13px 1px no-repeat, linear-gradient(#d6d6d6, #d6d6d6) 36px 1px / 1px 16px no-repeat, linear-gradient(#d6d6d6, #d6d6d6) 48px 1px / 1px 16px no-repeat; }
.where { display: flex; flex-direction: column; gap: 13px; margin-left: 8px; }
.where label { display: flex; align-items: center; gap: 6px; height: 13px; }
.ends { display: flex; gap: 181px; margin-top: 16px; }
.fld { display: flex; flex-direction: column; }
.fld > label { height: 12px; }
.foot { display: flex; justify-content: flex-end; gap: 8px; padding: 2px 14px 12px; }
.ok { border: 2px solid #0078d7; padding: 0; }
.grip { position: absolute; right: 2px; bottom: 2px; }

.edge { position: absolute; right: 0; top: 273px; width: 2px; height: 58px; background: #3d4050; border-radius: 2px 0 0 2px; }
.float { position: absolute; right: 31px; bottom: 37px; width: 60px; height: 60px; border-radius: 6px; background: #3f444ee8; display: flex; align-items: center; justify-content: center; }
.mark { position: absolute; right: 16px; bottom: 6px; font: 19px/28px "Liberation Sans", "Noto Sans CJK SC", sans-serif; color: #888a; text-shadow: 1px 1px #fffc; white-space: nowrap; pointer-events: none; }
</style>
